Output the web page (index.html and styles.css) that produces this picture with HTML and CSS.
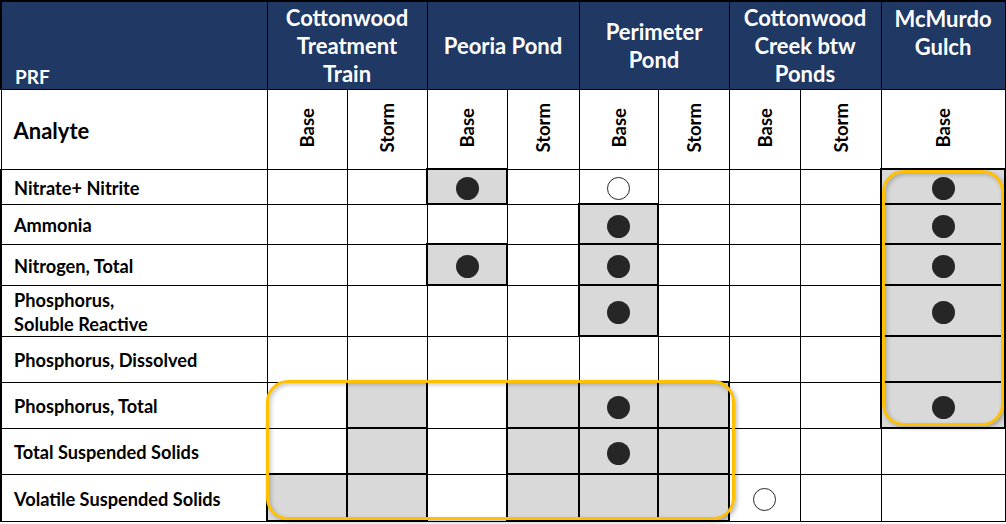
FILE: index.html
```html
<!DOCTYPE html>
<html lang="en">
<head>
<meta charset="utf-8">
<title>PRF Analyte Table</title>
<link rel="stylesheet" href="styles.css">
</head>
<body>
<div class="wrap">
  <table class="grid">
    <colgroup>
      <col class="c-an">
      <col class="c80"><col class="c80">
      <col class="c80"><col class="c72">
      <col class="c79"><col class="c71">
      <col class="c71"><col class="c81">
      <col class="c124">
    </colgroup>
    <thead>
      <tr class="r-head">
        <th class="prf">PRF</th>
        <th class="grp" colspan="2">Cottonwood<br>Treatment<br>Train</th>
        <th class="grp" colspan="2">Peoria Pond</th>
        <th class="grp" colspan="2">Perimeter<br>Pond</th>
        <th class="grp" colspan="2">Cottonwood<br>Creek btw<br>Ponds</th>
        <th class="grp top">McMurdo<br>Gulch</th>
      </tr>
      <tr class="r-sub">
        <th class="analyte">Analyte</th>
        <th class="vert"><span>Base</span></th>
        <th class="vert"><span>Storm</span></th>
        <th class="vert"><span>Base</span></th>
        <th class="vert"><span>Storm</span></th>
        <th class="vert"><span>Base</span></th>
        <th class="vert"><span>Storm</span></th>
        <th class="vert"><span>Base</span></th>
        <th class="vert"><span>Storm</span></th>
        <th class="vert"><span>Base</span></th>
      </tr>
    </thead>
    <tbody>
      <tr class="r1">
        <td class="name">Nitrate+ Nitrite</td>
        <td></td><td></td>
        <td class="g"><span class="dot"></span></td><td></td>
        <td><span class="dot open"></span></td><td></td>
        <td></td><td></td>
        <td class="g"><span class="dot"></span></td>
      </tr>
      <tr class="r2">
        <td class="name">Ammonia</td>
        <td></td><td></td>
        <td></td><td></td>
        <td class="g"><span class="dot"></span></td><td></td>
        <td></td><td></td>
        <td class="g"><span class="dot"></span></td>
      </tr>
      <tr class="r3">
        <td class="name">Nitrogen, Total</td>
        <td></td><td></td>
        <td class="g"><span class="dot"></span></td><td></td>
        <td class="g"><span class="dot"></span></td><td></td>
        <td></td><td></td>
        <td class="g"><span class="dot"></span></td>
      </tr>
      <tr class="r4">
        <td class="name">Phosphorus,<br>Soluble Reactive</td>
        <td></td><td></td>
        <td></td><td></td>
        <td class="g"><span class="dot"></span></td><td></td>
        <td></td><td></td>
        <td class="g"><span class="dot"></span></td>
      </tr>
      <tr class="r5">
        <td class="name">Phosphorus, Dissolved</td>
        <td></td><td></td>
        <td></td><td></td>
        <td></td><td></td>
        <td></td><td></td>
        <td class="g"></td>
      </tr>
      <tr class="r6">
        <td class="name">Phosphorus, Total</td>
        <td></td><td class="g"></td>
        <td></td><td class="g"></td>
        <td class="g"><span class="dot"></span></td><td class="g"></td>
        <td></td><td></td>
        <td class="g"><span class="dot"></span></td>
      </tr>
      <tr class="r7">
        <td class="name">Total Suspended Solids</td>
        <td></td><td class="g"></td>
        <td></td><td class="g"></td>
        <td class="g"><span class="dot"></span></td><td class="g"></td>
        <td></td><td></td>
        <td></td>
      </tr>
      <tr class="r8">
        <td class="name">Volatile Suspended Solids</td>
        <td class="g"></td><td class="g"></td>
        <td></td><td class="g"></td>
        <td class="g"></td><td class="g"></td>
        <td><span class="dot open"></span></td><td></td>
        <td></td>
      </tr>
    </tbody>
  </table>
  <div class="hl hl-bottom"></div>
  <div class="hl hl-mcm"></div>
</div>
</body>
</html>
```

FILE: styles.css
```css
* { box-sizing: border-box; }
html, body {
  margin: 0;
  padding: 0;
  background: #ffffff;
}
body {
  font-family: "Lato", "Open Sans", "Liberation Sans", sans-serif;
  font-weight: 700;
  color: #000000;
}
.wrap {
  position: relative;
  width: 1006px;
  height: 524px;
}
.grid {
  border-collapse: collapse;
  table-layout: fixed;
  width: 1004px;
}
.c-an { width: 266px; }
.c80 { width: 80px; }
.c72 { width: 72px; }
.c79 { width: 79px; }
.c71 { width: 71px; }
.c81 { width: 81px; }
.c124 { width: 124px; }

.grid th, .grid td {
  border: 1px solid #000000;
  padding: 0;
  font-weight: 700;
}
.r-head { height: 88px; }
.r-head th {
  background: #203864;
  color: #ffffff;
  border-top-width: 2px;
}
.r-head th:first-child { border-left-width: 2px; }
.grid th.grp {
  font-size: 22px;
  line-height: 28px;
  text-align: center;
  vertical-align: middle;
  padding-top: 1px;
}
.grid th.grp.top { vertical-align: top; padding-top: 3px; }
.grid th.prf {
  font-size: 19px;
  text-align: left;
  vertical-align: bottom;
  padding: 0 0 1px 13px;
}
.r-sub { height: 80px; }
.grid th.analyte {
  font-size: 22px;
  text-align: left;
  padding: 2px 0 0 12px;
  vertical-align: middle;
}
.vert { text-align: center; vertical-align: middle; }
.vert span {
  display: inline-block;
  writing-mode: vertical-rl;
  transform: rotate(180deg);
  font-size: 18.5px;
  line-height: 18px;
}
.grid td { vertical-align: middle; text-align: center; }
.grid td.name {
  font-size: 18.2px;
  line-height: 24px;
  text-align: left;
  padding: 2px 0 0 12px;
  vertical-align: middle;
}
.grid td:first-child { border-left-width: 2px; }
.r1 { height: 35px; }
.r2 { height: 40px; }
.r3 { height: 41px; }
.r4 { height: 51px; }
.r5 { height: 46px; }
.r6 { height: 46px; }
.r7 { height: 46px; }
.r8 { height: 47px; }

.grid td.g {
  background: #d9d9d9;
  border: 2px solid #000000;
}
.dot {
  display: block;
  width: 23px;
  height: 23px;
  margin: 4px auto 0;
  border-radius: 50%;
  background: #262626;
}
.dot.open {
  background: #ffffff;
  border: 1.5px solid #262626;
}

.hl {
  position: absolute;
  border: 3px solid #ffc000;
  border-radius: 22px;
  box-shadow: 2px 2px 4px rgba(0, 0, 0, 0.28), inset 2px 2px 4px rgba(0, 0, 0, 0.22);
  pointer-events: none;
}
.hl-bottom {
  left: 266px;
  top: 380px;
  width: 469px;
  height: 140px;
}
.hl-mcm {
  left: 882px;
  top: 170px;
  width: 122px;
  height: 256px;
}
```
